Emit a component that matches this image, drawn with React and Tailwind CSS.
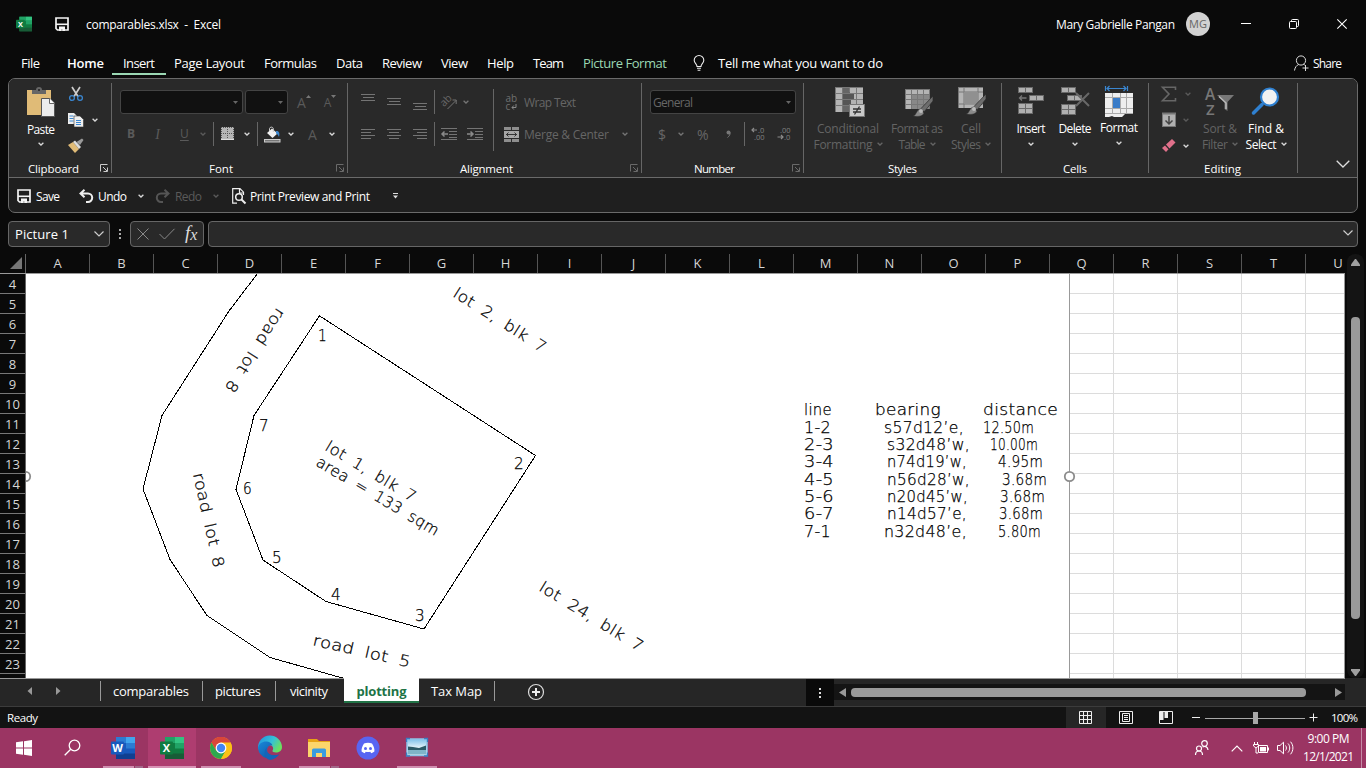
import React, { useLayoutEffect, useRef, useState } from "react";

/* Text set to an exact width by adjusting its tracking. */
function T({ w, children, className = "" }) {
  const ref = useRef(null);
  const [ls, setLs] = useState(0);
  useLayoutEffect(() => {
    const n = String(children).length;
    const natural = ref.current.getBoundingClientRect().width;
    if (n > 1) setLs((w - natural) / (n - 1));
  }, [w, children]);
  return (
    <span className={"block shrink-0 translate-y-px whitespace-pre " + className} style={{ width: w }}>
      <span ref={ref} style={{ letterSpacing: ls }}>{children}</span>
    </span>
  );
}

function Svg({ w, h, className = "", children }) {
  return (
    <svg width={w} height={h} viewBox={`0 0 ${w} ${h}`} fill="none" className={"block shrink-0 overflow-visible " + className}>
      {children}
    </svg>
  );
}

const Chev = ({ c = "#d8d8d8", className = "" }) => (
  <Svg w={6} h={4} className={className}>
    <path d="M0.6 0.7L3 3L5.4 0.7" stroke={c} strokeWidth="1.3" />
  </Svg>
);
const Tri = ({ className = "" }) => (
  <Svg w={5} h={3} className={className}><path d="M0 0h5L2.5 3z" fill="#666" /></Svg>
);
const Launcher = ({ c = "#6a6a6a", className = "" }) => (
  <Svg w={8} h={8} className={className}>
    <path d="M7.5 0.5H0.5V7.5M3 3L7 7M7.5 3.5V7.5H3.5" stroke={c} />
  </Svg>
);
const VSep = ({ className = "" }) => <div className={"w-px shrink-0 bg-[#666] " + className} />;

const SaveIcon = ({ className = "" }) => (
  <Svg w={14} h={14} className={className}>
    <path d="M1 1h12v12H2.5L1 11.5z" stroke="#f4f4f4" strokeWidth="1.7" />
    <path d="M1 7.3h12" stroke="#f4f4f4" strokeWidth="1.6" />
    <path d="M4 9.5h6V14H7.6v-2H6v2H4z" fill="#f4f4f4" />
  </Svg>
);

function Office({ letter, size, colors, tile }) {
  return (
    <svg width={size} height={size} viewBox="0 0 24 24" className="block shrink-0">
      <rect x="5" y="1" width="19" height="22" rx="1" fill={colors[2]} />
      <rect x="5" y="1" width="10" height="6" fill={colors[1]} />
      <rect x="15" y="1" width="9" height="6" fill={colors[0]} />
      <rect x="15" y="7" width="9" height="5.5" fill={colors[1]} />
      <rect x="5" y="17.5" width="19" height="5.5" fill={colors[3]} />
      <rect x="0" y="5.5" width="13" height="13" rx="1" fill={tile} />
      <text x="6.500" y="16" textAnchor="middle" fontFamily="Open Sans, sans-serif" fontWeight="700" fontSize="11" fill="#fff">{letter}</text>
    </svg>
  );
}
const XL = ["#33c481", "#21a366", "#107c41", "#185c37"];
const WD = ["#41a5ee", "#2b7cd3", "#185abd", "#103f91"];

function TitleBar() {
  return (
    <div className="flex h-[48px] items-center pl-[16px] text-[12px]">
      <Office letter="X" size={16} colors={XL} tile="#107c41" />
      <SaveIcon className="ml-[23px]" />
      <T w={135} className="ml-[17px]">{"comparables.xlsx  -  Excel"}</T>
      <T w={119} className="ml-[835px]">Mary Gabrielle Pangan</T>
      <div className="ml-[11px] flex size-[24px] items-center justify-center rounded-full bg-[#d2d2d2] text-[11px] text-[#666]">MG</div>
      <Svg w={10} h={10} className="ml-[31px]"><path d="M0 4.5h10" stroke="#fff" /></Svg>
      <Svg w={10} h={10} className="ml-[38px]">
        <rect x="0.5" y="2.5" width="7" height="7" rx="1" stroke="#fff" />
        <path d="M2.5 2V1.5a1 1 0 011-1h5a1 1 0 011 1v5a1 1 0 01-1 1H8" stroke="#fff" />
      </Svg>
      <Svg w={10} h={10} className="ml-[38px]"><path d="M0.3 0.3l9.4 9.4M9.7 0.3L0.3 9.7" stroke="#fff" strokeWidth="1.1" /></Svg>
    </div>
  );
}

function MenuTabs() {
  return (
    <div className="flex h-[30px] items-center pl-[21px] text-[13px]">
      <T w={19}>File</T>
      <T w={37} className="ml-[27px] font-semibold">Home</T>
      <div className="ml-[8px] flex h-[30px] w-[54px] flex-col items-center">
        <T w={32} className="mt-[4px] leading-[21px]">Insert</T>
        <div className="h-[2px] w-[54px] bg-[#9bd8b4]" />
      </div>
      <T w={71} className="ml-[8px]">Page Layout</T>
      <T w={53} className="ml-[19px]">Formulas</T>
      <T w={27} className="ml-[19px]">Data</T>
      <T w={40} className="ml-[19px]">Review</T>
      <T w={27} className="ml-[19px]">View</T>
      <T w={27} className="ml-[19px]">Help</T>
      <T w={31} className="ml-[19px]">Team</T>
      <T w={84} className="ml-[19px] text-[#9bd8b4]">Picture Format</T>
      <Svg w={12} h={16} className="ml-[26px]">
        <path d="M4 11.5C4 9 1.2 8.300 1.200 5.300a4.800 4.800 0 019.600 0C10.800 8.300 8 9 8 11.500zM4 13.300h4M4.600 15.200h2.800" stroke="#eee" strokeWidth="1.1" />
      </Svg>
      <T w={165} className="ml-[13px] font-medium">Tell me what you want to do</T>
      <Svg w={15} h={16} className="ml-[411px]">
        <circle cx="7" cy="5.500" r="4.600" stroke="#ddd" />
        <path d="M0.500 15.500C1 12 2.800 10.300 4.600 9.500M9.300 9.200c.8.300 1.200.6 1.700 1M11.500 10v6M8.500 13h6" stroke="#ddd" />
      </Svg>
      <T w={29} className="ml-[4px] text-[12px]">Share</T>
    </div>
  );
}

/* ---------- ribbon ---------- */
function Group({ width, label, lw, ll, launcher, launcherColor, children }) {
  return (
    <div className={"flex h-[90px] shrink-0 flex-col border-r border-[#666] " + width}>
      <div className="flex h-[77px] shrink-0 items-start">{children}</div>
      <div className="flex h-[16px] shrink-0 items-center text-[11.500px]">
        <T w={lw} className={ll}>{label}</T>
        {launcher && <Launcher className={launcher} c={launcherColor} />}
      </div>
    </div>
  );
}

function Clipboard() {
  return (
    <Group width="w-[103px]" label="Clipboard" lw={51} ll="ml-[19px]" launcher="ml-[21px]" launcherColor="#ccc">
      <div className="flex w-[59px] flex-col items-center pl-[5px] pt-[4px] text-[12px]">
        <Svg w={28} h={30}>
          <path d="M0 3h24v25H0z" fill="#e0bb77" />
          <path d="M5 7V3h4a3 3 0 016 0h4v4z" fill="#666" /><circle cx="12" cy="3" r="1" fill="#222" />
          <path d="M14.500 11.500h8.500l4.500 4.500v13.500h-13z" fill="#ececec" stroke="#555" />
          <path d="M22.500 11.500V16.500h5" stroke="#666" fill="#fff" />
        </Svg>
        <T w={28} className="mt-[3px] leading-[17px]">Paste</T>
        <Chev className="mt-[5px]" />
      </div>
      <div className="flex flex-col pt-[3px]">
        <Svg w={16} h={16}>
          <path d="M4 1l6 9.500M12 1L6 10.500" stroke="#ccc" strokeWidth="1.700" />
          <circle cx="4" cy="12" r="2.400" stroke="#3a86d0" strokeWidth="1.300" /><circle cx="12" cy="12" r="2.400" stroke="#3a86d0" strokeWidth="1.300" />
        </Svg>
        <div className="mt-[10px] flex items-center">
          <Svg w={16} h={16}>
            <path d="M0 1h6l3 3v8H0z" fill="#eee" /><path d="M1.500 4h4M1.500 6.500h4M1.500 9h4" stroke="#3a86d0" />
            <path d="M6 4h6l3.500 3.500V15H6z" fill="#eee" stroke="#333" strokeWidth=".6" /><path d="M8 8.500h5M8 10.500h5M8 12.500h5" stroke="#3a86d0" />
          </Svg>
          <Chev className="ml-[8px]" />
        </div>
        <Svg w={16} h={16} className="mt-[10px]">
          <path d="M0 7l5-3 6 7-4 4z" fill="#e0bb77" /><path d="M5 4l2-1.500 6 6.500-2 2z" fill="#ddd" /><path d="M8.500 4L14 .5 15.500 2 12 7z" fill="#999" />
        </Svg>
      </div>
    </Group>
  );
}

function FontGroup() {
  const dim = "#5a5a5a";
  return (
    <Group width="w-[236px]" label="Font" lw={24} ll="ml-[97px]" launcher="ml-[103px]">
      <div className="flex flex-col">
        <div className="mt-[7px] flex h-[24px] items-center pl-[8px]">
          <div className="flex h-[24px] w-[123px] items-center justify-end rounded-[3px] border border-[#444] bg-[#111] pr-[4px]"><Tri /></div>
          <div className="ml-[2px] flex h-[24px] w-[43px] items-center justify-end rounded-[3px] border border-[#444] bg-[#111] pr-[4px]"><Tri /></div>
          <span className="ml-[9px] mt-[2px] text-[14px] leading-[24px] text-[#5a5a5a]">A</span>
          <Svg w={5} h={3} className="-mt-[11px]"><path d="M0 3h5L2.500 0z" fill="#777" /></Svg>
          <span className="ml-[13px] mt-[2px] text-[12px] leading-[24px] text-[#5a5a5a]">A</span>
          <Svg w={5} h={3} className="-mt-[11px]"><path d="M0 0h5L2.500 3z" fill="#777" /></Svg>
        </div>
        <div className="mt-[8px] flex h-[24px] items-center pl-[15px] text-[12px] text-[#5a5a5a]">
          <span className="w-[9px] font-bold">B</span>
          <span className="ml-[17px] w-[9px] text-center font-['Liberation_Serif'] text-[14px] italic">I</span>
          <span className="ml-[18px] w-[9px] underline underline-offset-2">U</span>
          <Chev c={dim} className="ml-[11px]" />
          <VSep className="ml-[7px] h-[24px]" />
          <Svg w={14} h={14} className="ml-[7px]">
            <rect width="13" height="13" fill="#b5b5b5" />
            <path d="M0.500 0v13M0 0.500h13M12.500 0v13M6.500 0v13M0 6.500h13" stroke="#555" strokeDasharray="1 1" />
            <path d="M0 12.500h13" stroke="#ddd" />
          </Svg>
          <Chev className="ml-[9px]" />
          <VSep className="ml-[7px] h-[24px]" />
          <Svg w={17} h={17} className="ml-[6px]">
            <path d="M3 7l5-4.500 5.500 5L8.500 12z" fill="#f0f0f0" /><path d="M5.500 5V2.500a2 2 0 013.800 0V6" stroke="#ccc" />
            <path d="M12 5c3-.5 4 2 3 6-.8-2-1.500-3-3-3.500z" fill="#3a86d0" />
            <rect x="0.500" y="13.500" width="15.500" height="2.500" fill="#777" stroke="#ccc" />
          </Svg>
          <Chev className="ml-[7px]" />
          <span className="ml-[14px] w-[9px] text-[14px]">A</span>
          <Chev className="ml-[12px]" />
        </div>
      </div>
    </Group>
  );
}

const Lines = ({ rows, h = 16, className = "" }) => (
  <Svg w={14} h={h} className={className}>
    {rows.map(([x, y, l]) => <path key={y} d={`M${x} ${y + 0.5}h${l}`} stroke="#747474" />)}
  </Svg>
);
const Indent = ({ right, className }) => (
  <Svg w={16} h={14} className={className}>
    <path d="M0 1.500h16M8 4.500h8M8 7.500h8M8 10.500h8M0 12.500h16" stroke="#747474" />
    <path d={right ? "M0 7h6M3.500 4.500L6 7 3.500 9.500" : "M7 7H1M3.500 4.500L1 7l2.500 2.500"} stroke="#8a8a8a" strokeWidth="1.500" />
  </Svg>
);

function Alignment() {
  return (
    <Group width="w-[294px]" label="Alignment" lw={53} ll="ml-[112px]" launcher="ml-[117px]">
      <div className="flex flex-col pl-[13px]">
        <div className="mt-[7px] flex h-[24px] items-center">
          <Lines h={24} rows={[[0, 4, 14], [2, 7, 11], [0, 10, 14]]} />
          <Lines h={24} className="ml-[12px]" rows={[[0, 8, 14], [2, 11, 11], [0, 14, 14]]} />
          <Lines h={24} className="ml-[12px]" rows={[[0, 13, 14], [2, 16, 11], [0, 19, 14]]} />
          <VSep className="ml-[7px] h-[24px]" />
          <Svg w={17} h={16} className="ml-[6px]">
            <text x="-1" y="10" transform="rotate(-45 5 7)" fontFamily="Open Sans, sans-serif" fontSize="10.500" fill="#686868">ab</text>
            <path d="M6.500 15L15 6.500M11.500 6H15.200V10" stroke="#747474" />
          </Svg>
          <Chev c="#747474" className="ml-[5px]" />
        </div>
        <div className="mt-[8px] flex h-[24px] items-center">
          <Lines rows={[[0, 3, 14], [0, 6, 10], [0, 9, 14], [0, 12, 10]]} />
          <Lines className="ml-[12px]" rows={[[0, 3, 14], [2, 6, 10], [0, 9, 14], [2, 12, 10]]} />
          <Lines className="ml-[12px]" rows={[[0, 3, 14], [4, 6, 10], [0, 9, 14], [4, 12, 10]]} />
          <VSep className="ml-[7px] h-[24px]" />
          <Indent className="ml-[6px]" />
          <Indent right className="ml-[10px]" />
        </div>
      </div>
      <VSep className="ml-[10px] mt-[6px] h-[62px]" />
      <div className="flex flex-col pl-[10px] text-[12px] text-[#666]">
        <div className="mt-[7px] flex h-[24px] items-center">
          <Svg w={15} h={18}>
            <text x="1.500" y="9" fontFamily="Open Sans, sans-serif" fontSize="10" fill="#707070">ab</text>
            <text x="1.500" y="16.500" fontFamily="Open Sans, sans-serif" fontSize="10" fill="#707070">c</text>
            <path d="M12 11v3.500H8M9.800 12.500L8 14.500l1.800 2" stroke="#888" />
          </Svg>
          <T w={52} className="ml-[5px]">Wrap Text</T>
        </div>
        <div className="mt-[8px] flex h-[24px] items-center">
          <Svg w={15} h={15}>
            <rect width="15" height="15" fill="#8e8e8e" /><path d="M0 3.500h15M0 11.500h15M7.500 0v3M7.500 12v3" stroke="#2a2a2a" />
            <rect x="0" y="4" width="15" height="7" fill="#a6a6a6" />
            <path d="M2 7.500h11M4.500 5.500L2.500 7.500l2 2M10.500 5.500l2 2-2 2" stroke="#333" />
          </Svg>
          <T w={85} className="ml-[5px]">{"Merge & Center"}</T>
          <Chev c="#747474" className="ml-[13px]" />
        </div>
      </div>
    </Group>
  );
}

function Decimal({ inc, className }) {
  return (
    <Svg w={16} h={16} className={className}>
      <text x={inc ? 7 : 3} y="7" fontFamily="Open Sans, sans-serif" fontSize="7.500" fill="#808080">{inc ? ".0" : ".00"}</text>
      <text x={inc ? 3 : 7} y="14" fontFamily="Open Sans, sans-serif" fontSize="7.500" fill="#808080">{inc ? ".00" : ".0"}</text>
      <path d={inc ? "M6 4H1M3 2L1 4l2 2" : "M0.500 11H6M4 9l2 2-2 2"} stroke="#8a8a8a" strokeWidth="1.200" />
    </Svg>
  );
}

function NumberGroup() {
  return (
    <Group width="w-[162px]" label="Number" lw={41} ll="ml-[52px]" launcher="ml-[57px]">
      <div className="flex flex-col pl-[8px] text-[#666]">
        <div className="mt-[7px] flex h-[24px] w-[146px] items-center justify-between rounded-[3px] border border-[#444] bg-[#111] pl-[2px] pr-[4px] text-[12px]">
          <T w={40}>General</T><Tri />
        </div>
        <div className="mt-[8px] flex h-[24px] items-center pl-[8px] text-[14px]">
          <span className="w-[9px]">$</span>
          <Chev c="#747474" className="ml-[11px]" />
          <span className="ml-[13px] w-[13px]">%</span>
          <Svg w={6} h={8} className="ml-[16px]"><circle cx="2.500" cy="2.500" r="2" fill="#777" /><path d="M4 2.500c.3 2-.5 3.500-2.500 5" stroke="#777" /></Svg>
          <VSep className="ml-[12px] h-[24px]" />
          <Decimal inc className="ml-[6px]" />
          <Decimal className="ml-[10px]" />
        </div>
      </div>
    </Group>
  );
}

const Brush = ({ x = 0, y = 0 }) => (
  <g transform={`translate(${x} ${y})`}>
    <path d="M0 20c4-1 3-6 7-7l4 4c-1 3-5 4-11 3z" fill="#8a8a8a" stroke="#2a2a2a" strokeWidth=".5" />
    <path d="M8 12.500L20 0v5l-9 11z" fill="#6d6d6d" stroke="#2a2a2a" strokeWidth=".7" />
    <circle cx="8" cy="15" r="2" fill="#bbb" />
  </g>
);

function Big({ className = "", pad, icon, l1, w1, l2, w2, chev = "#d8d8d8" }) {
  return (
    <div className={"flex shrink-0 flex-col items-center text-[12px] " + className}>
      <div className={"flex h-[34px] items-start " + pad}>{icon}</div>
      <T w={w1} className="mt-[3px] leading-[16px]">{l1}</T>
      {l2 ? (
        <div className="flex items-center"><T w={w2} className="leading-[16px]">{l2}</T><Chev c={chev} className="ml-[4px]" /></div>
      ) : (
        <Chev c={chev} className="mt-[6px]" />
      )}
    </div>
  );
}

function Styles() {
  return (
    <Group width="w-[198px]" label="Styles" lw={29} ll="ml-[84px]">
      <Big className="ml-[8px] w-[72px] text-[#646464]" pad="pt-[4px] pl-[4px]" l1="Conditional" w1={62} l2="Formatting" w2={59} chev="#646464"
        icon={<Svg w={30} h={30}>
          <rect width="28" height="25" fill="#b4b4b4" /><path d="M8 0h7v25H8z" fill="#666" /><path d="M8 7h11v5H8zM8 13h8v5H8z" fill="#555" />
          <path d="M0 .5h28M0 6.500h28M0 12.500h28M0 18.500h28M.5 0v25M7.500 0v25M14.500 0v5M21.500 0v25" stroke="#777" />
          <rect x="14.500" y="17.500" width="15" height="12" fill="#c8c8c8" stroke="#777" /><path d="M18 22h8M18 25h8M24.500 19.500l-5 8" stroke="#333" strokeWidth="1.300" />
        </Svg>} />
      <Big className="ml-[4px] w-[58px] text-[#646464]" pad="pt-[6px] pl-[4px]" l1="Format as" w1={52} l2="Table" w2={27} chev="#646464"
        icon={<Svg w={29} h={28}>
          <rect width="25" height="20" fill="#b4b4b4" /><path d="M7 6h18v14H7z" fill="#888" />
          <path d="M0 .5h25M0 5.500h25M0 10.500h25M0 15.500h25M.5 0v20M6.500 0v20M12.500 0v20M18.500 0v20M24.500 0v20" stroke="#777" />
          <Brush x={8} y={7} />
        </Svg>} />
      <Big className="ml-[3px] w-[44px] text-[#646464]" pad="pt-[4px] pl-[3px]" l1="Cell" w1={20} l2="Styles" w2={30} chev="#646464"
        icon={<Svg w={29} h={28}>
          <rect width="25" height="21" fill="#b4b4b4" /><path d="M.5 0v21M6 0v21M20 0v21M0 .5h25M0 5h25M0 17h25" stroke="#777" />
          <path d="M6 5h14v12H6z" fill="#909090" /><Brush x={8} y={7} />
        </Svg>} />
    </Group>
  );
}

const Blk = ({ x, y, w = 14, h = 5 }) => (
  <g><rect x={x + 0.5} y={y + 0.5} width={w} height={h} fill="#b0b0b0" stroke="#6a6a6a" /><path d={`M${x + w / 2 + 0.5} ${y}v${h}`} stroke="#6a6a6a" /></g>
);

function Cells() {
  return (
    <Group width="w-[147px]" label="Cells" lw={24} ll="ml-[61px]">
      <Big className="ml-[9px] w-[40px]" pad="pt-[4px]" l1="Insert" w1={29}
        icon={<Svg w={27} h={28}><Blk x={0} y={0} /><Blk x={11} y={8} w={14} /><Blk x={0} y={16} /><Blk x={0} y={21} /><path d="M1.500 11h7M4 8.500L1.500 11 4 13.500" stroke="#777" strokeWidth="1.300" /></Svg>} />
      <Big className="ml-[4px] w-[40px]" pad="pt-[4px]" l1="Delete" w1={33}
        icon={<Svg w={29} h={28}><Blk x={0} y={0} /><Blk x={6} y={8} /><Blk x={0} y={17} /><Blk x={0} y={22} /><path d="M15 6l13 13M28 6L15 19" stroke="#686868" strokeWidth="2" /></Svg>} />
      <Big className="-mt-[1px] ml-[4px] w-[40px]" pad="pt-[4px]" l1="Format" w1={38}
        icon={<Svg w={28} h={32}>
          <path d="M.5 0v5M22.500 0v5M2 2.500h19M4.500 0L2 2.500 4.500 5M18.500 0L21 2.500 18.500 5" stroke="#3a86d0" strokeWidth="1.200" />
          <path d="M0 7h28v21h-8l-3 3h-8l-2-1-3 1H0z" fill="#eee" /><path d="M0 11.500h28M0 22.500h28M0 27.500h28M7.500 7v21M15.500 7v21M21.500 7v21" stroke="#aaa" />
          <rect x="8" y="12" width="7" height="10" fill="#3a7cc8" />
        </Svg>} />
    </Group>
  );
}

function Editing() {
  return (
    <Group width="w-[149px]" label="Editing" lw={37} ll="ml-[55px]">
      <div className="flex w-[46px] flex-col pl-[12px] pt-[3px]">
        <div className="flex items-center"><Svg w={16} h={16}><path d="M14.500 4V1.200H1.500L8 8l-6.500 6.800h13V12" stroke="#666" strokeWidth="1.600" /></Svg><Chev c="#5a5a5a" className="ml-[8px]" /></div>
        <div className="mt-[10px] flex items-center"><Svg w={16} h={16} ><rect x="1.500" y="1.500" width="13" height="13" fill="#b0b0b0" stroke="#777" /><path d="M1 1.500h14" stroke="#777" strokeWidth="2" /><path d="M8 4v8M4.500 8.500L8 12l3.500-3.500" stroke="#444" strokeWidth="1.500" /></Svg><Chev c="#5a5a5a" className="ml-[6px]" /></div>
        <div className="mt-[10px] flex items-center"><Svg w={16} h={16}><path d="M5 6.500L11 1l3.500 3.500-6 6z" fill="#e0708a" /><path d="M4 7.500l3.500 3.700L5 14 1 10z" fill="#e0708a" /></Svg><Chev className="ml-[6px]" /></div>
      </div>
      <Big className="ml-[3px] w-[44px] text-[#646464]" pad="pt-[4px]" l1="Sort &" w1={34} l2="Filter" w2={26} chev="#646464"
        icon={<Svg w={30} h={29}>
          <text x="0" y="12.500" fontFamily="Open Sans, sans-serif" fontSize="15.500" fontWeight="600" fill="#777">A</text><text x="1" y="27.500" fontFamily="Open Sans, sans-serif" fontSize="15" fontWeight="600" fill="#777">Z</text>
          <path d="M12 8h17l-6.500 7v9l-3-2v-7z" fill="#777" /><path d="M14 9.500l7 6.500v6" stroke="#bbb" strokeWidth="1.500" />
        </Svg>} />
      <Big className="ml-[1px] w-[46px]" pad="pt-[4px]" l1="Find &" w1={36} l2="Select" w2={31}
        icon={<Svg w={28} h={28}><path d="M1.500 26L10 17.500" stroke="#2f80d0" strokeWidth="3.500" strokeLinecap="round" /><circle cx="17.500" cy="10" r="8.500" fill="#f2f2f2" stroke="#2f80d0" strokeWidth="2.200" /></Svg>} />
    </Group>
  );
}

const Undo = ({ c, flip, className }) => (
  <Svg w={14} h={14} className={className + (flip ? " -scale-x-100" : "")}>
    <path d="M5.500 .8L1.500 4.500l4 3.800M1.800 4.500H9a4.200 4.200 0 010 8.400H7" stroke={c} strokeWidth="2" />
  </Svg>
);

function Ribbon() {
  return (
    <div className="mx-[8px] h-[135px] rounded-[7px] border border-[#6a6a6a] bg-[#1f1f1f]">
      <div className="flex h-[99px] items-start rounded-t-[6px] border-b border-[#6a6a6a] bg-[#292929] pt-[4px]">
        <Clipboard /><FontGroup /><Alignment /><NumberGroup /><Styles /><Cells /><Editing />
        <Svg w={14} h={8} className="ml-[38px] mt-[77px]"><path d="M.7 .7L7 7L13.300 .7" stroke="#ddd" strokeWidth="1.300" /></Svg>
      </div>
      <div className="flex h-[35px] items-center pl-[8px] text-[12px]">
        <SaveIcon className="mt-px" />
        <T w={24} className="ml-[5px]">Save</T>
        <Undo c="#eee" className="ml-[19px]" />
        <T w={29} className="ml-[5px]">Undo</T>
        <Chev className="ml-[11px]" />
        <Undo c="#555" flip className="ml-[12px]" />
        <T w={27} className="ml-[5px] text-[#5a5a5a]">Redo</T>
        <Chev c="#5a5a5a" className="ml-[11px]" />
        <Svg w={15} h={16} className="ml-[13px] mt-px">
          <path d="M5 15.200H.7V.7H8l3.500 3.500V7M7.500 1v4H11" stroke="#eee" strokeWidth="1.200" />
          <circle cx="7" cy="9" r="3.300" stroke="#eee" strokeWidth="1.500" /><path d="M9.500 11.500l4 4" stroke="#eee" strokeWidth="2" />
        </Svg>
        <T w={120} className="ml-[3px]">Print Preview and Print</T>
        <Svg w={7} h={6} className="ml-[22px]"><path d="M1 .5h5" stroke="#ddd" /><path d="M1 2.500h5L3.500 5.500z" fill="#ddd" /></Svg>
      </div>
    </div>
  );
}

function FormulaBar() {
  const box = "flex h-[26px] items-center rounded-[4px] border border-[#666] bg-[#292929] ";
  return (
    <div className="flex h-[36px] pl-[8px] pt-[8px]">
      <div className={box + "w-[102px] pl-[6px] text-[13px]"}>
        <T w={54}>Picture 1</T>
        <Svg w={10} h={6} className="ml-[25px]"><path d="M.5 .5L5 5L9.500 .5" stroke="#ccc" strokeWidth="1.200" /></Svg>
      </div>
      <Svg w={2} h={10} className="ml-[9px] mt-[8px]"><path d="M0 0h2v2H0zM0 4h2v2H0zM0 8h2v2H0z" fill="#aaa" /></Svg>
      <div className={box + "ml-[9px] w-[74px] pl-[6px]"}>
        <Svg w={12} h={12}><path d="M.5 .5l11 11M11.500 .5l-11 11" stroke="#888" /></Svg>
        <Svg w={16} h={12} className="ml-[10px]"><path d="M.5 6l5 5L15.500 .8" stroke="#888" /></Svg>
        <span className="-mt-[3px] ml-[10px] font-['Liberation_Serif'] text-[19px] italic leading-none text-[#ddd]">f</span>
        <span className="mt-[2px] font-['Liberation_Serif'] text-[16px] italic leading-none text-[#ddd]">x</span>
      </div>
      <div className={box + "ml-[4px] w-[1150px] justify-end pb-[3px] pr-[4px]"}>
        <Svg w={10} h={6}><path d="M.5 .5L5 5L9.500 .5" stroke="#ccc" strokeWidth="1.200" /></Svg>
      </div>
    </div>
  );
}

/* ---------- sheet ---------- */
const COLS = "ABCDEFGHIJKLMNOPQRSTU".split("");
const ROWS = Array.from({ length: 20 }, (_, i) => i + 4);

const LABELS = [
  [452, 296, 32.300, 107, "lot 2, blk 7"],
  [324, 449.500, 31, 103, "lot 1, blk 7"],
  [315, 465, 30.600, 140, "area = 133 sqm"],
  [538, 590, 31.500, 119, "lot 24, blk 7"],
  [277, 307, 123, 97, "road lot 8"],
  [193, 474, 77.500, 97, "road lot 8"],
  [312, 645, 13, 100, "road lot 5"],
  [318, 341, 0, 9, "1"], [514, 469, 0, 10, "2"], [415, 621, 0, 10, "3"], [331, 600, 0, 10, "4"],
  [272, 563, 0, 10, "5"], [243, 494, 0, 9, "6"], [259, 431, 0, 10, "7"],
];
const TABLE = [
  [415, [804, 28, "line"], [875, 66, "bearing"], [983, 75, "distance"]],
  [433, [804, 27, "1-2"], [884, 80, "s57d12’e,"], [983, 51, "12.50m"]],
  [450, [804, 30, "2-3"], [887, 83, "s32d48’w,"], [990, 48, "10.00m"]],
  [467, [804, 30, "3-4"], [887, 80, "n74d19’w,"], [998, 45, "4.95m"]],
  [485, [804, 30, "4-5"], [887, 83, "n56d28’w,"], [1002, 45, "3.68m"]],
  [502, [804, 30, "5-6"], [887, 81, "n20d45’w,"], [1000, 45, "3.68m"]],
  [519, [804, 30, "6-7"], [887, 80, "n14d57’e,"], [999, 44, "3.68m"]],
  [537, [804, 27, "7-1"], [884, 83, "n32d48’e,"], [998, 43, "5.80m"]],
];

function Plot() {
  return (
    <svg width="1052" height="404" viewBox="26 274 1052 404" fill="none" className="relative z-10 -mr-[8px] block shrink-0 font-['DejaVu_Sans_Light','DejaVu_Sans',sans-serif] text-[15.500px] font-extralight">
      <rect x="26" y="274" width="1043" height="404" fill="#fff" />
      <g stroke="#000" shapeRendering="crispEdges">
        <path d="M257.500 273.500L229 311L162 415.500L143 489L170 559.500L207 615.500L270 657.500L346 679" />
        <path d="M319 315.500L535.500 455.500L424 629L326 601.500L263 560L236 489.500L254 415.500L320 315" />
      </g>
      <path d="M1069.500 274v404" stroke="#999" />
      <g fill="#000" stroke="#000" strokeWidth=".25">
        {LABELS.map(([x, y, r, w, s]) => (
          <text key={s + x} x={x} y={y} textLength={w} lengthAdjust="spacingAndGlyphs" transform={`rotate(${r} ${x} ${y})`} className="tracking-[0.3px] [word-spacing:4px]">{s}</text>
        ))}
        {TABLE.flatMap(([y, ...cells]) => cells.map(([x, w, s]) => (
          <text key={s + y} x={x} y={y} textLength={w} lengthAdjust="spacingAndGlyphs" className="tracking-[0.3px]">{s}</text>
        )))}
      </g>
      <circle cx="1069.500" cy="476.500" r="4.700" fill="#fff" stroke="#8c8c8c" strokeWidth="1.800" />
      <circle cx="25.500" cy="476.500" r="4.700" fill="#fff" stroke="#8c8c8c" strokeWidth="1.800" />
    </svg>
  );
}

function Sheet() {
  return (
    <div className="flex h-[429px]">
      <div className="flex w-[1345px] flex-col overflow-hidden">
        <div className="flex h-[25px] shrink-0 items-end border-b border-[#999] text-[13px] text-[#d6d6d6]">
          <div className="flex h-[19px] w-[26px] shrink-0 items-end justify-end border-r border-[#666] pb-[4px] pr-[3px]">
            <Svg w={12} h={12}><path d="M12 0v12H0z" fill="#777" /></Svg>
          </div>
          {COLS.map((c) => (
            <div key={c} className="flex h-[19px] w-[64px] shrink-0 items-center justify-center border-r border-[#555] last:border-0">{c}</div>
          ))}
        </div>
        <div className="flex h-[404px] bg-white">
          <div className="w-[26px] shrink-0 overflow-hidden border-r border-[#666] bg-[#0a0a0a] text-[13px] text-[#d6d6d6]">
            {ROWS.map((r) => (
              <div key={r} className="flex h-[20px] items-center justify-center border-b border-[#777] pt-[3px]">{r}</div>
            ))}
          </div>
          <Plot />
          <div className="grid h-[404px] w-[275px] shrink-0 grid-cols-[44px_64px_64px_64px_39px] overflow-hidden border-r border-[#999]">
            {Array.from({ length: 21 * 5 }, (_, i) => (
              <div key={i} className="h-[20px] border-b border-r border-[#dcdcdc]" />
            ))}
          </div>
        </div>
      </div>
      <div className="ml-[2px] mt-[5px] flex h-[424px] w-[17px] flex-col items-center rounded-[8px] bg-[#141414] pt-[5px]">
        <Svg w={9} h={7}><path d="M0 7V5.500L4 0h1l4 5.500V7z" fill="#a0a0a0" /></Svg>
        <div className="mt-[51px] h-[302px] w-[9px] rounded-[4px] bg-[#9a9a9a]" />
        <Svg w={9} h={7} className="mt-[50px]"><path d="M0 0v1.500L4 7h1l4-5.500V0z" fill="#a0a0a0" /></Svg>
      </div>
    </div>
  );
}

function SheetTabs() {
  const sep = "h-[20px] w-px shrink-0 bg-[#999] ";
  return (
    <div className="flex h-[29px] border-b border-[#3c3c3c] bg-[#262626] text-[13px]">
      <div className="flex h-[25px] w-[1345px] items-center border-t border-[#999] pl-[27px]">
        <Svg w={5} h={8}><path d="M5 0v8L.5 4z" fill="#999" /></Svg>
        <Svg w={5} h={8} className="ml-[24px]"><path d="M0 0v8l4.500-4z" fill="#999" /></Svg>
        <div className={sep + "ml-[39px]"} />
        <T w={76} className="ml-[12px]">comparables</T>
        <div className={sep + "ml-[13px]"} />
        <T w={46} className="ml-[12px]">pictures</T>
        <div className={sep + "ml-[14px]"} />
        <T w={38} className="ml-[14px]">vicinity</T>
        <div className="-mt-px ml-[16px] flex h-[25px] w-[75px] items-center justify-center border-b-2 border-[#217346] bg-white pt-[2px] font-bold text-[#217346]">
          <T w={50}>plotting</T>
        </div>
        <T w={51} className="ml-[12px]">Tax Map</T>
        <div className={sep + "ml-[12px]"} />
        <Svg w={17} h={17} className="ml-[32px] mt-[2px]"><circle cx="9" cy="8" r="7.500" stroke="#ddd" strokeWidth="1.200" /><path d="M5 8h8M9 4v8" stroke="#eee" strokeWidth="2" /></Svg>
        <div className="ml-[262px] mt-[3px] flex h-[27px] w-[28px] items-center justify-center bg-[#0a0a0a]">
          <Svg w={2} h={10}><path d="M0 0h2v2H0zM0 4h2v2H0zM0 8h2v2H0z" fill="#ddd" /></Svg>
        </div>
        <div className="mt-[2px] flex h-[16px] w-[511px] shrink-0 items-center bg-[#141414] pl-[5px]">
          <Svg w={7} h={9}><path d="M7 0v9L0 4.500z" fill="#999" /></Svg>
          <div className="ml-[5px] h-[9px] w-[455px] rounded-[4px] bg-[#9a9a9a]" />
          <Svg w={7} h={9} className="ml-[29px]"><path d="M0 0v9l7-4.500z" fill="#999" /></Svg>
        </div>
      </div>
    </div>
  );
}

function StatusBar() {
  return (
    <div className="flex h-[21px] items-center bg-[#131313] pl-[7px] text-[11.500px]">
      <T w={31} className="-mt-px">Ready</T>
      <div className="ml-[1028px] flex h-[21px] w-[40px] items-center justify-center bg-[#262626] pb-px pr-px">
        <Svg w={13} h={13}><path d="M.5 .5h12v12H.5zM4.500 0v13M8.500 0v13M0 4.500h13M0 8.500h13" stroke="#eee" /></Svg>
      </div>
      <Svg w={14} h={13} className="-mt-px ml-[13px]"><path d="M.5 .5h13v12H.5zM3.500 2.500h7v8h-7zM5 4.500h4M5 6.500h4M5 8.500h4" stroke="#eee" /></Svg>
      <Svg w={14} h={13} className="-mt-px ml-[26px]"><path d="M.5 .5h13v12H.5z" stroke="#eee" /><path d="M1 1h3.500v8H1zM5.500 1H9v6H5.500z" fill="#eee" /></Svg>
      <Svg w={8} h={9} className="ml-[19px]"><path d="M0 4.500h8" stroke="#eee" /></Svg>
      <Svg w={100} h={12} className="ml-[5px]"><path d="M0 6.500h100" stroke="#a8a8a8" /><path d="M48 0h5v12h-5z" fill="#a8a8a8" /></Svg>
      <Svg w={9} h={9} className="ml-[4px]"><path d="M.5 4.500h8M4.500 .5v8" stroke="#eee" /></Svg>
      <T w={27} className="-mt-[2px] ml-[13px]">100%</T>
    </div>
  );
}

const TaskItem = ({ className = "", icon, bars = [] }) => (
  <div className={"flex h-[40px] shrink-0 flex-col items-center " + className}>
    <div className="flex h-[38px] items-center pt-px">{icon}</div>
    <div className="flex h-[2px] gap-px">{bars.map((b, i) => <div key={i} className={"h-[2px] " + b} />)}</div>
  </div>
);

function Taskbar() {
  return (
    <div className="flex h-[40px] items-center bg-[#9b3563]">
      <TaskItem className="w-[48px]" icon={<Svg w={16} h={16}><path d="M0 2.300l7-1v6.200H0zM8 1.200L16 0v7.500H8zM0 8.500h7v6.200l-7-1zM8 8.500h8V16l-8-1.200z" fill="#fff" /></Svg>} />
      <TaskItem className="w-[48px]" icon={<Svg w={17} h={17}><circle cx="10.500" cy="6.500" r="5.300" stroke="#fff" strokeWidth="1.300" /><path d="M6.700 10.300L.7 16.300" stroke="#fff" strokeWidth="1.300" /></Svg>} />
      <TaskItem className="ml-[3px] w-[48px]" icon={<Office letter="W" size={24} colors={WD} tile="#185abd" />} bars={["w-[31px] bg-[#cf8fb0]", "w-[8px] bg-[#a3688a]"]} />
      <TaskItem className="ml-[1px] w-[48px] bg-[#ae3d70]" icon={<Office letter="X" size={24} colors={XL} tile="#107c41" />} bars={["w-[48px] bg-[#d792b5]"]} />
      <TaskItem className="ml-[1px] w-[48px]" bars={["w-[40px] bg-[#cf8fb0]"]} icon={
        <Svg w={22} h={22}>
          <circle cx="11" cy="11" r="11" fill="#fbc116" />
          <path d="M11 11L1.500 5.500A11 11 0 0120.500 5.500z" fill="#d9463a" /><path d="M11 5.500H20.500A11 11 0 001.500 5.500L6.200 14z" fill="#d9463a" />
          <path d="M1.500 5.500A11 11 0 0011 22l4.700-8.200H6.200z" fill="#2da94f" /><path d="M11 22a11 11 0 009.500-16.500H11l4.700 8.200z" fill="#fbc116" />
          <circle cx="11" cy="11" r="5.400" fill="#fff" /><circle cx="11" cy="11" r="4.200" fill="#4285f4" />
        </Svg>} />
      <TaskItem className="ml-[1px] w-[48px]" icon={
        <Svg w={24} h={24}>
          <defs>
            <linearGradient id="ea" x1="0" y1="0" x2="1" y2=".5"><stop offset="0" stopColor="#1f8fe0" /><stop offset=".6" stopColor="#35c1d8" /><stop offset="1" stopColor="#6be060" /></linearGradient>
            <linearGradient id="eb" x1="0" y1="0" x2="1" y2="1"><stop offset="0" stopColor="#1988d8" /><stop offset="1" stopColor="#0c4fa0" /></linearGradient>
          </defs>
          <path d="M0 12A12 12 0 0124 11c0 4-3 5.500-6 5.500-2.500 0-4-1-3.500-2 1.500-2 .5-5.500-3.500-5.500-5 0-8 3-8 8z" fill="url(#ea)" />
          <path d="M0 12c1-5 5-7 9-6.500 3 .4 5 2 5.500 4C13 8.500 9.500 9.500 9 13.500c0 4 4 7.500 12 5A12 12 0 010 12z" fill="url(#eb)" />
          <path d="M9 11c-2 5 2 10.500 12 7.500-1.500 2.500-5 5-9 5.500C6 23 5 15 9 11z" fill="#1464b8" />
        </Svg>} />
      <TaskItem className="ml-[1px] w-[48px]" bars={["w-[31px] bg-[#cf8fb0]", "w-[8px] bg-[#a3688a]"]} icon={
        <Svg w={22} h={20}><path d="M0 1h9l2 2h11v16H0z" fill="#e8a315" /><path d="M0 4h22v15H0z" fill="#fcd56b" /><path d="M4 19v-7a1.500 1.500 0 011.500-1.500h11A1.500 1.500 0 0118 12v7h-4v-4H8v4z" fill="#3a9be0" /></Svg>} />
      <TaskItem className="ml-[1px] w-[48px]" icon={
        <Svg w={24} h={24}><circle cx="12" cy="12" r="11.500" fill="#5865f2" />
          <path d="M8 7.500c2.500-1 5.500-1 8 0 1.700 2.500 2.700 5.200 2.400 8-1 .9-2 1.400-3.200 1.700l-.9-1.400c-1.500.4-3.100.4-4.600 0l-.9 1.400c-1.200-.3-2.200-.8-3.200-1.700-.3-2.800.7-5.500 2.400-8z" fill="#fff" />
          <circle cx="9.500" cy="12.500" r="1.500" fill="#5865f2" /><circle cx="14.500" cy="12.500" r="1.500" fill="#5865f2" />
        </Svg>} />
      <TaskItem className="ml-[1px] w-[48px]" bars={["w-[40px] bg-[#cf8fb0]"]} icon={
        <Svg w={22} h={19}>
          <defs>
            <linearGradient id="sky" x1="0" y1="0" x2="0" y2="1"><stop offset="0" stopColor="#7cc0ea" /><stop offset=".6" stopColor="#f2fafc" /></linearGradient>
          </defs>
          <rect x="1" y="1" width="20" height="16.500" fill="url(#sky)" stroke="#8dc4e8" strokeWidth="1.500" />
          <path d="M2 8.500l5 .5 6 1 7-2.500V12H2z" fill="#2b5a68" /><path d="M2 12h18v4.500H2z" fill="#7fb4c8" />
          <path d="M.5 4V.5H4M18 .5h3.500V4M.5 14.500V18H4M18 18h3.500v-3.500" stroke="#3a7cc0" strokeWidth="1.300" />
        </Svg>} />
      <Svg w={15} h={16} className="ml-[753px]">
        <circle cx="10.500" cy="3.500" r="2.800" stroke="#fff" strokeWidth="1.200" /><circle cx="5" cy="8.500" r="2.500" stroke="#fff" strokeWidth="1.200" />
        <path d="M1.500 15c0-2.500 1.500-4 3.500-4s3.500 1.500 3.500 4M8.500 7c3-1.300 5.300 0 5.500 3" stroke="#fff" strokeWidth="1.200" />
      </Svg>
      <Svg w={12} h={7} className="ml-[22px]"><path d="M.7 6.300L6 1l5.300 5.300" stroke="#fff" strokeWidth="1.200" /></Svg>
      <Svg w={16} h={12} className="ml-[10px]"><path d="M5.500 3.500h9v7h-9zM15.500 5.500v3M1.500 0v2M4.500 0v2M.5 2.500h5v1.500L3 6 .5 4zM3 6v5h2" stroke="#fff" /><path d="M7 5h6v4.500H7z" fill="#fff" /></Svg>
      <Svg w={17} h={14} className="ml-[8px]"><path d="M.5 4.500H3L6.500 1.200v11.600L3 9.500H.5zM8.500 4.500c1.200 1.500 1.200 3.500 0 5M11 2.500c2.300 2.500 2.300 6.500 0 9M13.500.7c3.200 3.500 3.200 9 0 12.600" stroke="#fff" /></Svg>
      <div className="ml-[9px] flex w-[51px] flex-col items-center text-[12px] leading-[18px]">
        <T w={42} className="-mt-[2px]">9:00 PM</T>
        <T w={51}>12/1/2021</T>
      </div>
      <div className="ml-[7px] h-[40px] w-px bg-[#c58aa6]" />
    </div>
  );
}

export default function App() {
  return (
    <div className="flex h-[768px] w-[1366px] flex-col overflow-hidden bg-[#0a0a0a] font-['Open_Sans','Noto_Sans',sans-serif] text-white">
      <TitleBar />
      <MenuTabs />
      <Ribbon />
      <FormulaBar />
      <Sheet />
      <SheetTabs />
      <StatusBar />
      <Taskbar />
    </div>
  );
}
